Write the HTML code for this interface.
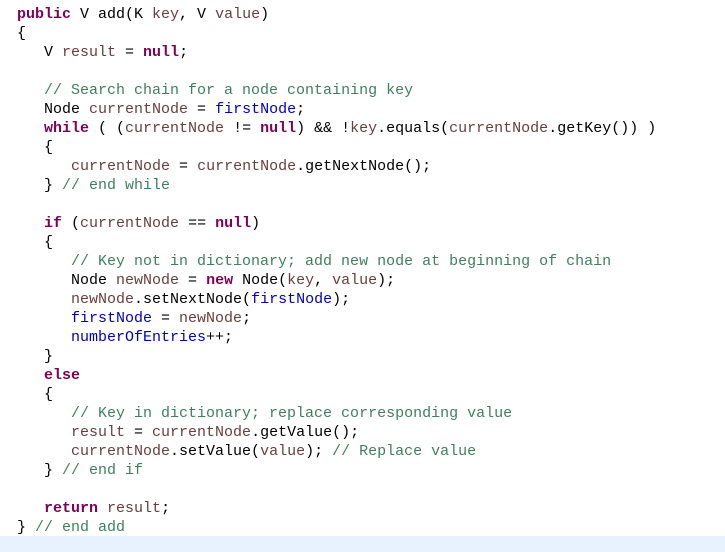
<!DOCTYPE html>
<html><head><meta charset="utf-8"><style>
html,body{margin:0;padding:0;background:#fff;width:725px;height:552px;overflow:hidden}
pre{margin:0;padding:5px 0 0 17px;font-family:"Liberation Mono",monospace;font-size:15px;line-height:19px;color:#000}
.k{color:#7f0055;font-weight:bold}
.c{color:#3f7f5f}
.f{color:#0000c0}
.v{color:#6a3e3e}
.hl{position:absolute;left:0;top:536px;width:725px;height:16px;background:#e8f2fe}
</style></head><body>
<div class="hl"></div>
<pre><span class="k">public</span> V add(K <span class="v">key</span>, V <span class="v">value</span>)
{
   V <span class="v">result</span> = <span class="k">null</span>;

   <span class="c">// Search chain for a node containing key</span>
   Node <span class="v">currentNode</span> = <span class="f">firstNode</span>;
   <span class="k">while</span> ( (<span class="v">currentNode</span> != <span class="k">null</span>) &amp;&amp; !<span class="v">key</span>.equals(<span class="v">currentNode</span>.getKey()) )
   {
      <span class="v">currentNode</span> = <span class="v">currentNode</span>.getNextNode();
   } <span class="c">// end while</span>

   <span class="k">if</span> (<span class="v">currentNode</span> == <span class="k">null</span>)
   {
      <span class="c">// Key not in dictionary; add new node at beginning of chain</span>
      Node <span class="v">newNode</span> = <span class="k">new</span> Node(<span class="v">key</span>, <span class="v">value</span>);
      <span class="v">newNode</span>.setNextNode(<span class="f">firstNode</span>);
      <span class="f">firstNode</span> = <span class="v">newNode</span>;
      <span class="f">numberOfEntries</span>++;
   }
   <span class="k">else</span>
   {
      <span class="c">// Key in dictionary; replace corresponding value</span>
      <span class="v">result</span> = <span class="v">currentNode</span>.getValue();
      <span class="v">currentNode</span>.setValue(<span class="v">value</span>); <span class="c">// Replace value</span>
   } <span class="c">// end if</span>

   <span class="k">return</span> <span class="v">result</span>;
} <span class="c">// end add</span></pre>
</body></html>
